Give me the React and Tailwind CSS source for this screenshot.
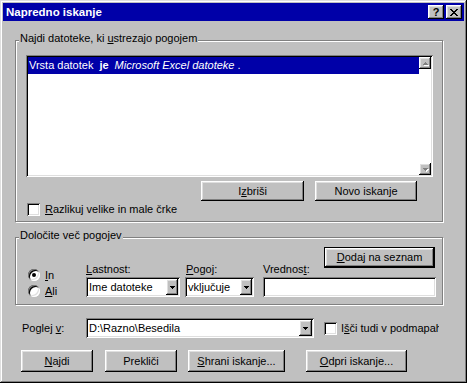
const raised =
  "shadow-[inset_-1px_-1px_#000,inset_1px_1px_#fff,inset_-2px_-2px_#808080,inset_2px_2px_#dfdfdf]";
const sunken =
  "shadow-[inset_1px_1px_#808080,inset_-1px_-1px_#fff,inset_2px_2px_#000,inset_-2px_-2px_#dfdfdf]";
const etched = "border border-[#808080] shadow-[inset_1px_1px_#fff,1px_1px_#fff]";

function Arrow({ up, color = "#000" }) {
  const d = up
    ? "M2 0h1v1H2zM1 1h3v1H1zM0 2h5v1H0z"
    : "M0 0h5v1H0zM1 1h3v1H1zM2 2h1v1H2z";
  return (
    <svg width="5" height="3" viewBox="0 0 5 3" shapeRendering="crispEdges">
      <path d={d} fill={color} />
    </svg>
  );
}

function ScrollButton({ up }) {
  return (
    <div className={`relative flex h-[12px] w-[12px] items-center justify-center bg-[#c0c0c0] ${raised}`}>
      <div className="relative">
        <div className="absolute left-[1px] top-[1px]">
          <Arrow up={up} color="#fff" />
        </div>
        <div className="relative">
          <Arrow up={up} color="#808080" />
        </div>
      </div>
    </div>
  );
}

function Button({ className, children, isDefault }) {
  return (
    <div
      className={`flex items-center justify-center bg-[#c0c0c0] ${raised} ${
        isDefault ? "border border-black" : ""
      } ${className}`}
    >
      <span className="whitespace-nowrap">{children}</span>
    </div>
  );
}

function Combo({ className, value, arrowWidth = "w-[12px]" }) {
  return (
    <div className={`flex bg-white p-[2px] ${sunken} ${className}`}>
      <div className="flex flex-1 items-center overflow-hidden whitespace-nowrap pl-[1px]">
        {value}
      </div>
      <div className={`flex items-center justify-center bg-[#c0c0c0] ${raised} ${arrowWidth}`}>
        <Arrow />
      </div>
    </div>
  );
}

function Checkbox() {
  return <div className={`h-[13px] w-[13px] shrink-0 bg-white ${sunken}`} />;
}

function Radio({ checked }) {
  return (
    <div
      className={`flex h-[12px] w-[12px] shrink-0 items-center justify-center rounded-full bg-white ${sunken}`}
    >
      {checked && <div className="h-[4px] w-[4px] rounded-full bg-black" />}
    </div>
  );
}

function Group({ label, className, children }) {
  return (
    <div className={`relative ${etched} ${className}`}>
      <span className="absolute -top-[9px] left-[3px] bg-[#c0c0c0] px-[1px] whitespace-nowrap">
        {label}
      </span>
      {children}
    </div>
  );
}

export default function App() {
  return (
    <div className="h-[383px] w-[467px] overflow-hidden bg-[#c0c0c0] p-[3px] font-['Liberation_Sans',Arial,sans-serif] text-[11px] leading-[13px] text-black shadow-[inset_-1px_-1px_#000,inset_1px_1px_#dfdfdf,inset_-2px_-2px_#808080,inset_2px_2px_#fff]">
      {/* title bar */}
      <div className="flex h-[18px] items-center justify-between bg-[#0000a8] pl-[3px] pr-[2px]">
        <span className="text-[11.5px] font-bold text-white">Napredno iskanje</span>
        <div className="flex gap-[2px]">
          <div className={`flex h-[14px] w-[16px] items-center justify-center bg-[#c0c0c0] ${raised}`}>
            <span className="text-[11px] font-bold leading-none">?</span>
          </div>
          <div className={`flex h-[14px] w-[16px] items-center justify-center bg-[#c0c0c0] ${raised}`}>
            <svg width="8" height="7" viewBox="0 0 8 7" shapeRendering="crispEdges">
              <path
                d="M0 0h2v1H0zM6 0h2v1H6zM1 1h2v1H1zM5 1h2v1H5zM2 2h4v1H2zM3 3h2v1H3zM2 4h4v1H2zM1 5h2v1H1zM5 5h2v1H5zM0 6h2v1H0zM6 6h2v1H6z"
                fill="#000"
              />
            </svg>
          </div>
        </div>
      </div>

      <div className="pl-[12px]">
        {/* group 1 */}
        <Group
          label={
            <>
              Najdi datoteke, ki <u>u</u>strezajo pogojem
            </>
          }
          className="mt-[19px] h-[182px] w-[428px] pl-[10px] pt-[14px]"
        >
          <div className={`flex h-[122px] w-[407px] bg-white p-[2px] ${sunken}`}>
            <div className="flex-1">
              <div className="flex h-[17px] items-center whitespace-nowrap bg-[#0000a8] pl-[1px] text-white">
                <span>Vrsta datotek</span>
                <span className="ml-[6px] font-bold">je</span>
                <span className="ml-[6px] italic">Microsoft Excel datoteke</span>
                <span className="ml-[3px]">.</span>
              </div>
            </div>
            <div className="flex w-[12px] flex-col justify-between bg-white">
              <ScrollButton up />
              <ScrollButton />
            </div>
          </div>

          <div className="mt-[4px] flex gap-[11px] pl-[175px]">
            <Button className="h-[20px] w-[103px]">
              I<u>z</u>briši
            </Button>
            <Button className="h-[20px] w-[102px]">
              Novo iskan<u>j</u>e
            </Button>
          </div>

          <div className="mt-[2px] flex h-[13px] items-center pl-[1px]">
            <Checkbox />
            <span className="ml-[5px]">
              <u>R</u>azlikuj velike in male črke
            </span>
          </div>
        </Group>

        {/* group 2 */}
        <Group label="Določite več pogojev" className="mt-[15px] flex h-[68px] w-[428px]">
          <div className="ml-[12px] mt-[29px] w-[58px]">
            <div className="flex h-[16px] items-center">
              <Radio checked />
              <span className="ml-[5px]">
                <u>I</u>n
              </span>
            </div>
            <div className="flex h-[16px] items-center">
              <Radio />
              <span className="ml-[5px]">
                <u>A</u>li
              </span>
            </div>
          </div>
          <div className="mt-[25px] w-[99px]">
            <div>
              <u>L</u>astnost:
            </div>
            <Combo className="mt-[1px] h-[20px] w-[94px]" value="Ime datoteke" />
          </div>
          <div className="mt-[25px] w-[78px]">
            <div className="pl-[1px]">
              <u>P</u>ogoj:
            </div>
            <Combo className="mt-[1px] h-[20px] w-[69px]" value="vključuje" />
          </div>
          <div className="mt-[9px] w-[173px]">
            <Button isDefault className="ml-[61px] h-[21px] w-[111px]">
              <u>D</u>odaj na seznam
            </Button>
            <div className="-mt-[5px]">
              Vrednos<u>t</u>:
            </div>
            <div className={`mt-[1px] h-[20px] w-[173px] bg-white ${sunken}`} />
          </div>
        </Group>

        {/* look in */}
        <div className="mt-[13px] flex h-[20px] items-center">
          <span className="ml-[7px] w-[64px]">
            Poglej <u>v</u>:
          </span>
          <Combo className="h-[20px] w-[228px]" value="D:\Razno\Besedila" arrowWidth="w-[13px]" />
          <div className="ml-[10px]">
            <Checkbox />
          </div>
          <span className="ml-[4px] w-[98px] overflow-hidden whitespace-nowrap">
            I<u>š</u>či tudi v podmapah
          </span>
        </div>

        {/* buttons */}
        <div className="mt-[12px] flex">
          <Button className="ml-[6px] h-[22px] w-[72px]">
            <u>N</u>ajdi
          </Button>
          <Button className="ml-[12px] h-[22px] w-[72px]">Prekliči</Button>
          <Button className="ml-[11px] h-[22px] w-[97px]">
            <u>S</u>hrani iskanje...
          </Button>
          <Button className="ml-[21px] h-[22px] w-[101px]">
            <u>O</u>dpri iskanje...
          </Button>
        </div>
      </div>
    </div>
  );
}
